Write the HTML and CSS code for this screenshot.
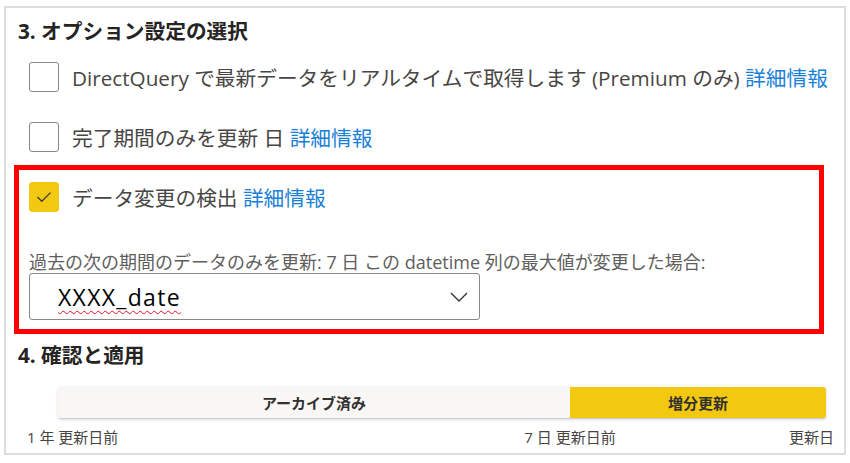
FILE: index.html
```html
<!DOCTYPE html>
<html lang="ja">
<head>
<meta charset="utf-8">
<title>増分更新の設定</title>
<link rel="stylesheet" href="styles.css">
</head>
<body>
<div class="panel">
  <h2 class="heading">3. オプション設定の選択</h2>
  <div class="options">
    <div class="option">
      <span class="checkbox"></span>
      <span class="option-text">DirectQuery で最新データをリアルタイムで取得します (Premium のみ) <a class="link">詳細情報</a></span>
    </div>
    <div class="option second">
      <span class="checkbox"></span>
      <span class="option-text">完了期間のみを更新 日 <a class="link">詳細情報</a></span>
    </div>
  </div>
  <div class="highlight">
    <div class="option">
      <span class="checkbox checked">
        <svg width="16" height="12" viewBox="0 0 16 12"><polyline points="1.5,6 5.8,10.3 14.5,1.6" fill="none" stroke="#3b3a39" stroke-width="1.3"/></svg>
      </span>
      <span class="option-text">データ変更の検出 <a class="link">詳細情報</a></span>
    </div>
    <div class="field-label">過去の次の期間のデータのみを更新: 7 日 この datetime 列の最大値が変更した場合:</div>
    <div class="dropdown">
      <span class="dropdown-value">XXXX_date</span>
      <svg class="chevron" width="18" height="10" viewBox="0 0 18 10"><polyline points="1,1 9,9 17,1" fill="none" stroke="#323130" stroke-width="1.3"/></svg>
    </div>
  </div>
  <h2 class="heading second-heading">4. 確認と適用</h2>
  <div class="timeline">
    <div class="bar">
      <div class="segment archived">アーカイブ済み</div>
      <div class="segment incremental">増分更新</div>
    </div>
    <div class="ticks">
      <span class="tick first">1 年 更新日前</span>
      <div class="tick-right">
        <span class="tick middle">7 日 更新日前</span>
        <span class="tick last">更新日</span>
      </div>
    </div>
  </div>
</div>
</body>
</html>
```
FILE: styles.css
```css
* { box-sizing: border-box; }
html, body { margin: 0; padding: 0; background: #ffffff; }
body {
  font-family: "Open Sans", "Noto Sans CJK JP", sans-serif;
  color: #3b3a39;
}
.panel {
  margin: 6px 4px 0 4px;
  width: 842px;
  height: 449px;
  border: 2px solid #dddddd;
  padding: 9px 0 0 8px;
}
.heading {
  margin: 0;
  padding-left: 4px;
  font-size: 20.7px;
  line-height: 28px;
  font-weight: 700;
  color: #252423;
}
.options {
  padding-left: 15px;
  margin-top: 17px;
}
.option {
  display: flex;
  align-items: center;
  height: 30px;
}
.option.second { margin-top: 30px; }
.checkbox {
  width: 30px;
  height: 30px;
  flex: none;
  border: 1px solid #8a8886;
  border-radius: 3px;
  display: flex;
  align-items: center;
  justify-content: center;
}
.checkbox.checked {
  background: #f2c811;
  border-color: #f2c811;
}
.option-text {
  margin-left: 13px;
  font-size: 20.7px;
  white-space: nowrap;
  color: #484644;
}
.link { color: #1a7fd6; }
.highlight {
  margin-top: 13px;
  width: 810px;
  border: 5px solid #ff0000;
  padding: 12px 0 9px 10px;
}
.field-label {
  margin-top: 41px;
  font-size: 18px;
  line-height: 18px;
  color: #605e5c;
  white-space: nowrap;
}
.dropdown {
  margin-top: 2px;
  width: 451px;
  height: 47px;
  border: 1px solid #8a8886;
  border-radius: 3px;
  display: flex;
  align-items: center;
  justify-content: space-between;
  padding: 0 11px 0 28px;
}
.dropdown-value {
  font-size: 23px;
  letter-spacing: 1.3px;
  color: #000000;
  text-decoration: underline wavy #e81123;
  text-decoration-thickness: 1px;
  text-underline-offset: 4px;
}
.chevron { display: block; }
.second-heading { margin-top: 7px; }
.timeline {
  margin-top: 18px;
  margin-left: 44px;
  width: 768px;
}
.bar {
  display: grid;
  grid-template-columns: 2fr 1fr;
  height: 31px;
  border-radius: 3px;
  box-shadow: 0 1.6px 3.6px rgba(0,0,0,0.13), 0 0.3px 0.9px rgba(0,0,0,0.11);
}
.segment {
  display: flex;
  align-items: center;
  justify-content: center;
  font-size: 15px;
  font-weight: 700;
  color: #323130;
}
.archived { background: #f8f7f6; border-radius: 3px 0 0 3px; }
.incremental { background: #f2c811; border-radius: 0 3px 3px 0; }
.ticks {
  display: grid;
  grid-template-columns: 2fr 1fr;
  margin-top: 10px;
  font-size: 15px;
  line-height: 18px;
  color: #484644;
}
.tick { white-space: nowrap; }
.tick.first { margin-left: -31px; }
.tick-right {
  display: flex;
  justify-content: space-between;
  margin-right: -8px;
}
.tick.middle { transform: translateX(-50%); }
```
